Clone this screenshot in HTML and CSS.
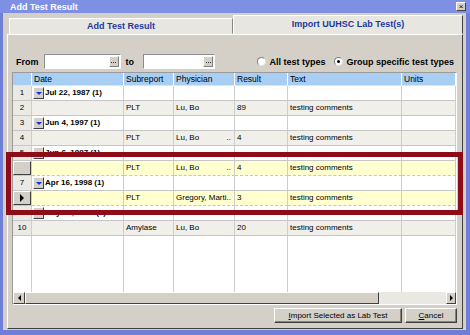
FILE: index.html
```html
<!DOCTYPE html>
<html lang="en">
<head>
    <meta charset="UTF-8" />
    <title>Add Test Result</title>
    <link rel="stylesheet" href="styles.css">
</head>
<body>
<div class="window">
    <div class="titlebar">
        <span class="title">Add Test Result</span>
        <span class="close">&times;</span>
    </div>
    <div class="frame">
        <div class="tabs">
            <div class="tab">Add Test Result</div>
            <div class="tab active">Import UUHSC Lab Test(s)</div>
        </div>
        <div class="panel">
            <div class="filters">
                <label class="lbl">From</label>
                <div class="datebox w1"><span class="dots"><i></i><i></i><i></i></span></div>
                <label class="lbl to">to</label>
                <div class="datebox w2"><span class="dots"><i></i><i></i><i></i></span></div>
                <div class="radios">
                    <span class="radio"></span><span class="lbl">All test types</span>
                    <span class="radio on"></span><span class="lbl">Group specific test types</span>
                </div>
            </div>

            <div class="grid">
                <div class="row head">
                    <div class="c num"></div>
                    <div class="c">Date</div>
                    <div class="c">Subreport</div>
                    <div class="c">Physician</div>
                    <div class="c">Result</div>
                    <div class="c">Text</div>
                    <div class="c">Units</div>
                </div>

                <div class="row group">
                    <div class="c num">1</div>
                    <div class="c date"><span class="expand"><i></i></span>Jul 22, 1987 (1)</div>
                    <div class="c"></div><div class="c"></div><div class="c"></div><div class="c"></div><div class="c"></div>
                </div>
                <div class="row data">
                    <div class="c num">2</div>
                    <div class="c"></div>
                    <div class="c">PLT</div>
                    <div class="c">Lu, Bo</div>
                    <div class="c">89</div>
                    <div class="c">testing comments</div>
                    <div class="c"></div>
                </div>
                <div class="row group">
                    <div class="c num">3</div>
                    <div class="c date"><span class="expand"><i></i></span>Jun 4, 1997 (1)</div>
                    <div class="c"></div><div class="c"></div><div class="c"></div><div class="c"></div><div class="c"></div>
                </div>
                <div class="row data">
                    <div class="c num">4</div>
                    <div class="c"></div>
                    <div class="c">PLT</div>
                    <div class="c split"><span>Lu, Bo</span><span>..</span></div>
                    <div class="c">4</div>
                    <div class="c">testing comments</div>
                    <div class="c"></div>
                </div>
                <div class="row group">
                    <div class="c num">5</div>
                    <div class="c date"><span class="expand"><i></i></span>Jun 6, 1997 (1)</div>
                    <div class="c"></div><div class="c"></div><div class="c"></div><div class="c"></div><div class="c"></div>
                </div>
                <div class="row data picked">
                    <div class="c num"><span class="rowbtn"></span></div>
                    <div class="c"></div>
                    <div class="c">PLT</div>
                    <div class="c split"><span>Lu, Bo</span><span>..</span></div>
                    <div class="c">4</div>
                    <div class="c">testing comments</div>
                    <div class="c"></div>
                </div>
                <div class="row group">
                    <div class="c num">7</div>
                    <div class="c date"><span class="expand"><i></i></span>Apr 16, 1998 (1)</div>
                    <div class="c"></div><div class="c"></div><div class="c"></div><div class="c"></div><div class="c"></div>
                </div>
                <div class="row data picked current">
                    <div class="c num"><span class="rowbtn"><b></b></span></div>
                    <div class="c"></div>
                    <div class="c">PLT</div>
                    <div class="c">Gregory, Marti..</div>
                    <div class="c">3</div>
                    <div class="c">testing comments</div>
                    <div class="c"></div>
                </div>
                <div class="row group">
                    <div class="c num">9</div>
                    <div class="c date"><span class="expand"><i></i></span>May 27, 2000 (1)</div>
                    <div class="c"></div><div class="c"></div><div class="c"></div><div class="c"></div><div class="c"></div>
                </div>
                <div class="row data">
                    <div class="c num">10</div>
                    <div class="c"></div>
                    <div class="c">Amylase</div>
                    <div class="c">Lu, Bo</div>
                    <div class="c">20</div>
                    <div class="c">testing comments</div>
                    <div class="c"></div>
                </div>

                <div class="row blank">
                    <div class="c"></div><div class="c"></div><div class="c"></div><div class="c"></div>
                    <div class="c"></div><div class="c"></div><div class="c"></div>
                </div>

                <div class="hscroll">
                    <span class="sbtn"><i class="left"></i></span>
                    <span class="thumb"><span class="grip"></span></span>
                    <span class="track"></span>
                    <span class="sbtn narrow"><i class="right"></i></span>
                </div>
            </div>

            <div class="actions">
                <button class="btn wide"><u>I</u>mport Selected as Lab Test</button>
                <button class="btn"><u>C</u>ancel</button>
            </div>
        </div>
    </div>

    <div class="highlight"></div>
</div>
</body>
</html>
```

FILE: styles.css
```css
body { margin: 0; background: #fff; font-family: "Liberation Sans", Arial, sans-serif; }

.window { position: relative; width: 470px; height: 335px; overflow: hidden; }

.titlebar { height: 13px; background: #7d90e4; display: flex; align-items: center; padding-left: 10px; padding-right: 4px; }
.title { color: #fff; font-weight: bold; font-size: 9px; flex: 1; }
.close { width: 8px; height: 7px; background: #d4d0c8; border: 1px solid; border-color: #fff #404040 #404040 #fff; font-size: 8px; line-height: 7px; text-align: center; color: #000; }

.frame { height: 322px; box-sizing: border-box; background: #d4d0c8; border: solid #6f7ed8; border-width: 0 4px 5px 3px; padding: 2px 3px 1px 4px; }

.tabs { display: flex; height: 19px; align-items: flex-end; }
.tab { box-sizing: border-box; font-size: 9px; font-weight: bold; color: #1b3a9c; text-align: center; background: #e8e6e0; border: 1px solid; border-color: #fff #8a8780 transparent #fff; }
.tab:first-child { margin-left: 2px; width: 224px; height: 16px; line-height: 14px; }
.tab.active { width: 230px; height: 19px; line-height: 17px; border-right-color: #404040; }

.panel { height: 295px; box-sizing: border-box; border: 1px solid; border-color: #fff #404040 #404040 #fff; padding: 19px 5px 5px 4px; }

.filters { display: flex; align-items: center; height: 15px; padding-left: 4px; }
.lbl { font-size: 9px; font-weight: bold; color: #000; }
.to { margin-left: 5px; }
.datebox { height: 15px; box-sizing: border-box; background: #fff; border: 1px solid; border-color: #8c8c8c #fff #fff #8c8c8c; margin-left: 5px; display: flex; justify-content: flex-end; align-items: center; padding-right: 1px; }
.datebox.w1 { width: 77px; }
.datebox.w2 { width: 72px; margin-left: 9px; }
.dots { width: 10px; height: 11px; box-sizing: border-box; background: #d4d0c8; border: 1px solid; border-color: #fff #808080 #808080 #fff; display: flex; align-items: center; justify-content: center; gap: 1px; padding-top: 1px; }
.dots i { width: 1px; height: 1px; background: #333; }

.radios { margin-left: auto; margin-right: 3px; display: flex; align-items: center; }
.radio { width: 9px; height: 9px; box-sizing: border-box; border-radius: 50%; background: #fff; border: 1px solid; border-color: #808080 #e0e0e0 #e0e0e0 #808080; margin-right: 3px; display: flex; align-items: center; justify-content: center; }
.radio.on::after { content: ""; width: 3px; height: 3px; border-radius: 50%; background: #000; }
.radio + .lbl + .radio { margin-left: 9px; }

.grid { margin-top: 3px; width: 445px; height: 233px; box-sizing: border-box; border: 1px solid; border-color: #9a9a9a #fff #fff #9a9a9a; background: #fff; }

.row { display: grid; grid-template-columns: 19px 92px 50px 61px 53px 114px 54px; height: 15px; }
.c { box-sizing: border-box; border-right: 1px solid #cdcdcd; border-bottom: 1px solid #c6c6c6; font-size: 8px; line-height: 14px; padding-left: 2px; white-space: nowrap; overflow: hidden; color: #000; }
.c.num { text-align: center; padding-left: 0; background: #ebe9e3; }

.row.head { height: 13px; background: #a8cef4; }
.row.head .c { line-height: 12px; font-size: 8.5px; border-right-color: #fff; border-bottom-color: #d8e6f4; }
.row.head .c.num { background: #a8cef4; }

.row.group .c { background: #fff; }
.row.group .c.num { background: #ebe9e3; }
.date { font-weight: bold; display: flex; align-items: center; padding-left: 1px; }
.expand { width: 11px; height: 12px; box-sizing: border-box; background: #d4d0c8; border: 1px solid; border-color: #fff #404040 #404040 #fff; margin-right: 1px; display: flex; align-items: center; justify-content: center; }
.expand i { width: 0; height: 0; border-left: 3px solid transparent; border-right: 3px solid transparent; border-top: 3px solid #1530f0; }

.row.data .c { background: #f0efe9; }
.row.data .c.num { background: #ebe9e3; }
.row.picked .c { background: #ffffd0; border-bottom-style: dashed; }
.split { display: flex; justify-content: space-between; padding-right: 3px; }

.rowbtn { display: flex; align-items: center; justify-content: center; height: 14px; box-sizing: border-box; background: #d4d0c8; border: 1px solid; border-color: #fff #404040 #404040 #fff; }
.rowbtn b { width: 0; height: 0; border-top: 4px solid transparent; border-bottom: 4px solid transparent; border-left: 4px solid #000; }
.row.picked .c.num { background: #d4d0c8; padding: 0; }

.row.blank { height: 56px; }
.row.blank .c { border-bottom: none; }

.hscroll { display: flex; height: 12px; background: #e8e6e0; }
.sbtn { width: 12px; box-sizing: border-box; background: #d4d0c8; border: 1px solid; border-color: #fff #404040 #404040 #fff; display: flex; align-items: center; justify-content: center; }
.sbtn.narrow { width: 10px; }
.sbtn .left { border-top: 3px solid transparent; border-bottom: 3px solid transparent; border-right: 3px solid #000; }
.sbtn .right { border-top: 3px solid transparent; border-bottom: 3px solid transparent; border-left: 3px solid #000; }
.thumb { width: 354px; box-sizing: border-box; background: #d4d0c8; border: 1px solid; border-color: #fff #404040 #404040 #fff; display: flex; align-items: center; justify-content: center; }
.grip { width: 4px; height: 4px; background-image: radial-gradient(#888 40%, transparent 45%); background-size: 2px 2px; }
.track { flex: 1; background: #e9e8e3; }

.actions { display: flex; justify-content: flex-end; gap: 3px; margin-top: 3px; }
.btn { height: 15px; width: 52px; padding: 0; font-family: "Liberation Sans", Arial, sans-serif; font-size: 8px; color: #000; background: #d4d0c8; border: 1px solid; border-color: #fff #404040 #404040 #fff; box-shadow: inset -1px -1px #808080; }
.btn.wide { width: 128px; }

.highlight { position: absolute; left: 6px; top: 152px; width: 457px; height: 63px; box-sizing: border-box; border: 5px solid #8e0c18; }
```
